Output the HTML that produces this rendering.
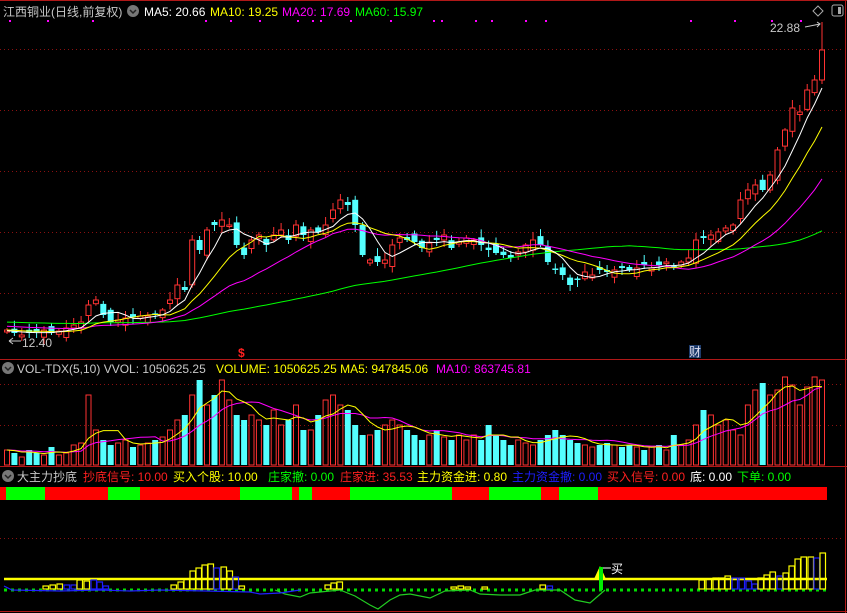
<!DOCTYPE html>
<html><head><meta charset="utf-8">
<style>
html,body{margin:0;padding:0;background:#000;width:847px;height:613px;overflow:hidden}
svg{display:block}
text{font-family:"Liberation Sans","Noto Sans CJK SC",sans-serif;font-size:12px}
</style></head><body>
<svg id="s" width="847" height="613" xmlns="http://www.w3.org/2000/svg">
<rect width="847" height="613" fill="#000"/>
<g stroke="#8a1010" stroke-dasharray="1,3" stroke-width="1">
<line x1="0" y1="49.5" x2="844" y2="49.5"/><line x1="0" y1="110.5" x2="844" y2="110.5"/>
<line x1="0" y1="171.5" x2="844" y2="171.5"/><line x1="0" y1="232.5" x2="844" y2="232.5"/>
<line x1="0" y1="293.5" x2="844" y2="293.5"/>
<line x1="0" y1="384.5" x2="844" y2="384.5"/><line x1="0" y1="425.5" x2="844" y2="425.5"/>
<line x1="0" y1="538.5" x2="844" y2="538.5"/>
</g>
<g stroke="#b01818" stroke-width="1">
<line x1="0" y1="0.5" x2="847" y2="0.5"/>
<line x1="0" y1="359.5" x2="847" y2="359.5"/>
<line x1="0" y1="466.5" x2="847" y2="466.5"/>
<line x1="0" y1="611.5" x2="847" y2="611.5"/>
<line x1="845.5" y1="0" x2="845.5" y2="613"/>
</g>
<g id="dyn"></g>
<!-- headers -->
<text x="3" y="16" fill="#c8c8c8" font-size="13">江西铜业(日线,前复权)</text>
<circle cx="133" cy="11" r="6" fill="#777"/><path d="M130 10l3 3 3-3" stroke="#222" stroke-width="1.5" fill="none"/>
<text x="144" y="16" fill="#fff" font-size="13">MA5: 20.66</text>
<text x="210" y="16" fill="#ffff00" font-size="13">MA10: 19.25</text>
<text x="282" y="16" fill="#ff00ff" font-size="13">MA20: 17.69</text>
<text x="355" y="16" fill="#00ff00" font-size="13">MA60: 15.97</text>
<path d="M818 6l5 5-5 5-5-5z" stroke="#aaa" fill="none"/>
<rect x="832" y="5" width="11" height="11" rx="2" stroke="#aaa" fill="none"/><rect x="838" y="7" width="3" height="7" fill="#aaa"/>
<text x="770" y="32" fill="#c8c8c8" font-size="12">22.88</text>
<path d="M805 27l15-3" stroke="#c8c8c8" fill="none"/><path d="M817 22l3 2-3 3" stroke="#c8c8c8" fill="none"/>
<text x="22" y="347" fill="#c8c8c8" font-size="12">12.40</text>
<path d="M9 341h12M9 341l4-3M9 341l4 3" stroke="#c8c8c8" fill="none"/>
<text x="238" y="357" fill="#ff2020" font-size="12" font-weight="bold">$</text>
<rect x="689" y="345" width="12" height="13" fill="#1c3a6a"/>
<text x="689" y="356" fill="#dde" font-size="11">财</text>
<circle cx="8" cy="368" r="6" fill="#777"/><path d="M5 367l3 3 3-3" stroke="#222" stroke-width="1.5" fill="none"/>
<text x="17" y="373" fill="#c8c8c8">VOL-TDX(5,10) VVOL: 1050625.25</text>
<text x="216" y="373" fill="#ffff00">VOLUME: 1050625.25 MA5: 947845.06</text>
<text x="436" y="373" fill="#ff00ff">MA10: 863745.81</text>
<circle cx="8" cy="476" r="6" fill="#777"/><path d="M5 475l3 3 3-3" stroke="#222" stroke-width="1.5" fill="none"/>
<text x="17" y="481" fill="#c8c8c8" font-size="13">大主力抄底</text>
<text x="83" y="481" fill="#ff2020">抄底信号: 10.00</text>
<text x="173" y="481" fill="#ffff00">买入个股: 10.00</text>
<text x="268" y="481" fill="#00ff00">庄家撤: 0.00</text>
<text x="340" y="481" fill="#ff2020">庄家进: 35.53</text>
<text x="417" y="481" fill="#ffff00">主力资金进: 0.80</text>
<text x="512" y="481" fill="#1e1eff">主力资金撤: 0.00</text>
<text x="607" y="481" fill="#ff2020">买入信号: 0.00</text>
<text x="690" y="481" fill="#fff">底: 0.00</text>
<text x="737" y="481" fill="#00ff00">下单: 0.00</text>
</svg>
<script>
(function(){
var NS="http://www.w3.org/2000/svg",g=document.getElementById("dyn"),h="";
var C=[330,333,335,333,332,330,333,331,328,325,322,305,300,315,322,320,318,317,316,316,315,310,300,285,290,240,250,230,225,220,225,245,255,240,235,245,235,230,240,225,235,230,232,225,210,200,205,225,255,260,262,260,245,238,240,242,248,243,240,235,248,242,238,240,245,250,253,255,258,252,245,240,245,262,270,275,285,280,272,275,270,272,270,268,270,268,265,268,265,262,268,262,258,240,238,235,232,228,225,200,190,185,190,175,150,130,108,112,90,80,50];
var V=[15,12,8,15,12,10,18,10,12,20,22,70,35,25,20,22,25,18,20,22,25,28,35,45,50,70,85,60,70,85,65,50,45,50,45,40,55,40,45,60,35,35,50,65,70,60,55,40,30,30,35,40,45,40,35,30,25,30,35,28,25,30,25,30,25,40,30,25,20,25,22,20,25,30,35,30,25,22,20,18,20,22,20,18,20,18,15,18,20,15,30,20,25,40,55,50,40,45,35,30,60,75,82,70,75,88,80,60,78,88,85];
var N=C.length,dx=(822-7)/(N-1);function X(i){return 7+i*dx}
var O=[],up=[];
for(var i=0;i<N;i++){var o=i?C[i-1]+((i*37)%11-5)*1.3:332;if(Math.abs(o-C[i])<1.5)o=C[i]+((i%2)?3:-3);if(i==N-1)o=80;O.push(o);up.push(C[i]<o);}
// MAs
function ma(arr,n,pad){var r=[];for(var i=0;i<arr.length;i++){var s=0;for(var k=i-n+1;k<=i;k++)s+=k<0?pad:arr[k];r.push(s/n);}return r}
function line(a,col,yf,start){var p="";for(var i=start||0;i<a.length;i++)p+=(p?"L":"M")+X(i).toFixed(1)+" "+yf(a[i]).toFixed(1);return '<path d="'+p+'" stroke="'+col+'" fill="none" stroke-width="1"/>'}
var id=function(v){return v};
// candles
for(var i=0;i<N;i++){var x=X(i),t=Math.min(O[i],C[i]),b=Math.max(O[i],C[i]);var hi=t-(2+(i*13)%7),lo=b+(2+(i*7)%6);if(i==N-1)hi=22;
var col=up[i]?"#ff3232":"#54ffff";
h+='<line x1="'+x.toFixed(1)+'" y1="'+hi+'" x2="'+x.toFixed(1)+'" y2="'+lo+'" stroke="'+col+'"/>';
if(up[i])h+='<rect x="'+(x-2.5).toFixed(1)+'" y="'+t+'" width="5" height="'+Math.max(b-t,1)+'" fill="#000" stroke="'+col+'"/>';
else h+='<rect x="'+(x-3).toFixed(1)+'" y="'+t+'" width="6" height="'+Math.max(b-t,1.5)+'" fill="'+col+'"/>';}
h+=line(ma(C,60,322),"#00ff00",id)+line(ma(C,20,326),"#ff00ff",id)+line(ma(C,10,330),"#ffff00",id)+line(ma(C,5,331),"#ffffff",id);
// magenta dots
[9,47,92,205,230,259,297,312,320,350,390,433,441,475,491,525,545,690,734,771,800].forEach(function(x){h+='<rect x="'+x+'" y="20" width="2" height="2" fill="#ff00ff"/>'});
// volume
var VB=465;
for(var i=0;i<N;i++){var x=X(i),hh=V[i];if(up[i])h+='<rect x="'+(x-2.5).toFixed(1)+'" y="'+(VB-hh)+'" width="5" height="'+hh+'" fill="none" stroke="#ff3232"/>';else h+='<rect x="'+(x-3).toFixed(1)+'" y="'+(VB-hh)+'" width="6" height="'+hh+'" fill="#54ffff"/>';}
var vy=function(v){return VB-v};
h+=line(ma(V,10,15),"#ff00ff",vy)+line(ma(V,5,15),"#ffff00",vy);
// strip
var seg=[[0,6,"r"],[6,45,"g"],[45,108,"r"],[108,140,"g"],[140,240,"r"],[240,292,"g"],[292,299,"r"],[299,312,"g"],[312,350,"r"],[350,452,"g"],[452,489,"r"],[489,541,"g"],[541,559,"r"],[559,598,"g"],[598,827,"r"]];
seg.forEach(function(s){h+='<rect x="'+s[0]+'" y="487" width="'+(s[1]-s[0])+'" height="13" fill="'+(s[2]=="r"?"#ff0000":"#00ff00")+'"/>'});
// bottom panel
var BB=589;
h+='<line x1="4" y1="590" x2="827" y2="590" stroke="#00dd00" stroke-width="3" stroke-dasharray="3,4"/>';
h+='<line x1="4" y1="579" x2="827" y2="579" stroke="#ffff00" stroke-width="2.5"/>';
h+='<path d="M275 590L285 594L300 597L310 593L340 590L355 596L370 605L378 609L390 600L400 595L410 594L430 598L445 591L470 590L480 594L500 595L520 595L535 590L560 590L575 600L590 603L605 590" stroke="#22cc22" fill="none" stroke-width="1.2"/>';
h+='<path d="M4 586L12 590L60 591L100 590L130 591L160 590L250 592L260 594L280 593L300 590" stroke="#2020ff" fill="none" stroke-width="1.2"/>';
var bars=[[43,586,"y"],[50,585,"y"],[57,584,"y"],[64,585,"b"],[71,585,"b"],[77,580,"y"],[84,581,"y"],[91,580,"b"],[97,582,"b"],[103,586,"b"],[171,585,"y"],[178,582,"y"],[184,579,"y"],[190,571,"y"],[196,568,"y"],[202,565,"y"],[208,564,"y"],[214,568,"b"],[221,567,"y"],[227,571,"y"],[233,577,"b"],[239,586,"y"],[325,585,"y"],[331,583,"y"],[337,582,"y"],[451,587,"y"],[458,586,"y"],[465,587,"y"],[482,587,"y"],[540,585,"y"],[547,586,"b"],
[699,580,"y"],[706,579,"y"],[713,578,"y"],[719,578,"y"],[725,576,"y"],[732,578,"b"],[739,578,"b"],[746,581,"b"],[752,584,"b"],[758,578,"y"],[764,575,"y"],[770,572,"y"],[777,576,"b"],[783,573,"y"],[789,566,"y"],[795,559,"y"],[801,557,"y"],[808,557,"y"],[814,558,"b"],[820,553,"y"]];
bars.forEach(function(b){h+='<rect x="'+b[0]+'" y="'+b[1]+'" width="5.5" height="'+(BB-b[1])+'" fill="none" stroke="'+(b[2]=="y"?"#ffff00":"#1e1eff")+'" stroke-width="1.2"/>'});
h+='<path d="M594 579L600 566L606 579Z" fill="#ffff00"/><rect x="599" y="567" width="4" height="23" fill="#00ee00"/>';
h+='<line x1="603" y1="568" x2="611" y2="568" stroke="#fff"/><text x="611" y="573" fill="#fff" font-size="11">买</text>';
g.innerHTML=h;
})();
</script>
</body></html>
